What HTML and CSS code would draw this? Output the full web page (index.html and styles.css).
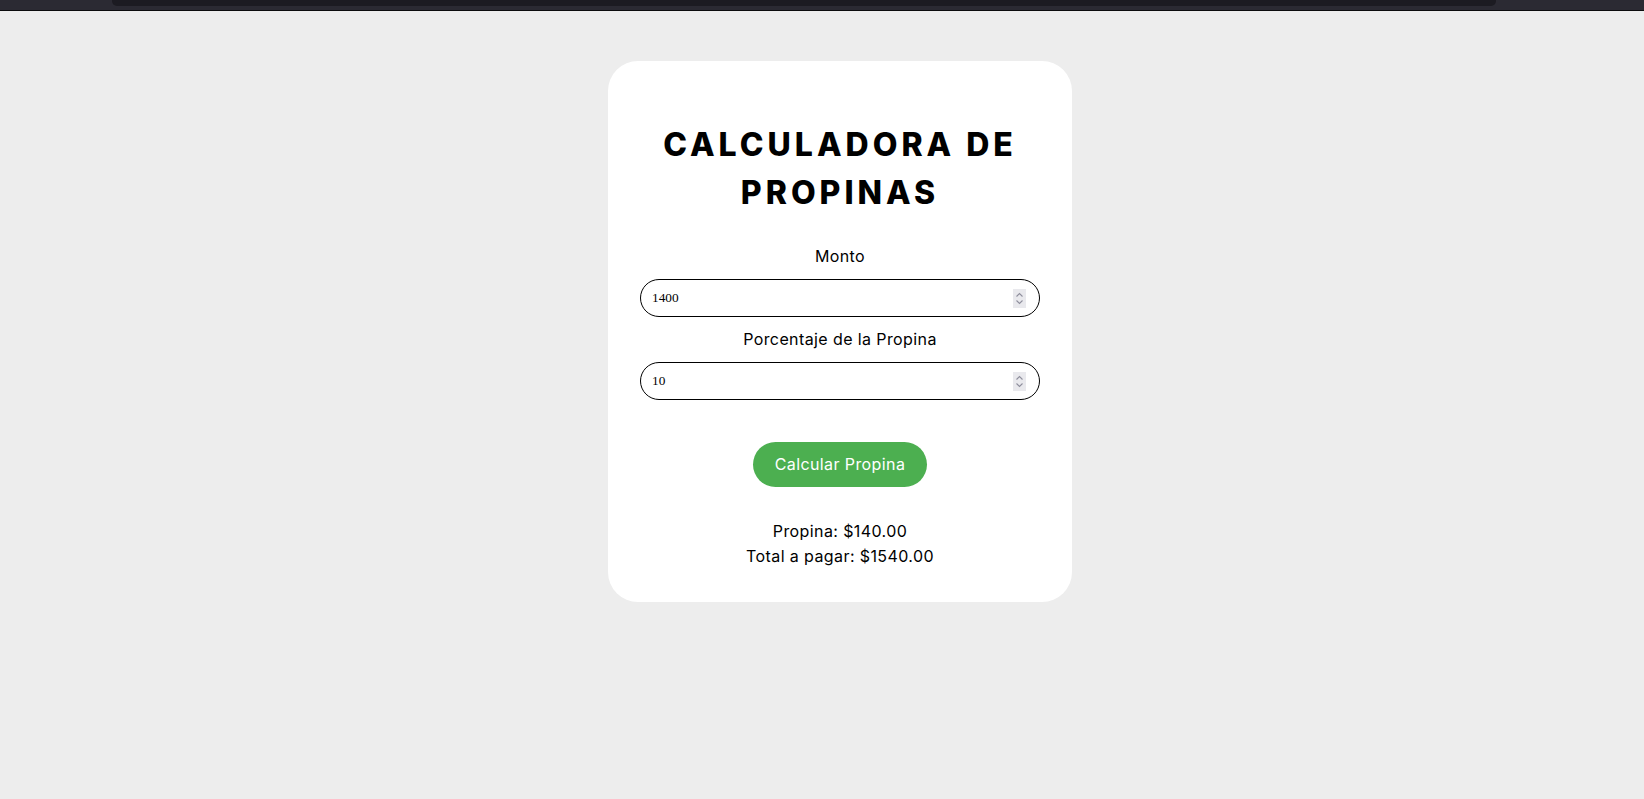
FILE: index.html
```html
<!DOCTYPE html>
<html lang="es">
<head>
<meta charset="utf-8">
<title>Calculadora de Propinas</title>
<link rel="stylesheet" href="styles.css">
</head>
<body>
  <div class="topbar"><div class="topbar-inner"></div></div>
  <main class="page">
    <section class="card">
      <h1 class="title">CALCULADORA DE PROPINAS</h1>
      <label class="label label-first" for="monto">Monto</label>
      <div class="field">
        <input class="field-input" id="monto" type="text" value="1400">
        <span class="spin">
          <svg width="13" height="19" viewBox="0 0 13 19"><path d="M3.5 7.5 L6.5 4.5 L9.5 7.5" fill="none" stroke="#8f8f9d" stroke-width="1.1"/><path d="M3.5 11.5 L6.5 14.5 L9.5 11.5" fill="none" stroke="#8f8f9d" stroke-width="1.1"/></svg>
        </span>
      </div>
      <label class="label label-second" for="porcentaje">Porcentaje de la Propina</label>
      <div class="field">
        <input class="field-input" id="porcentaje" type="text" value="10">
        <span class="spin">
          <svg width="13" height="19" viewBox="0 0 13 19"><path d="M3.5 7.5 L6.5 4.5 L9.5 7.5" fill="none" stroke="#8f8f9d" stroke-width="1.1"/><path d="M3.5 11.5 L6.5 14.5 L9.5 11.5" fill="none" stroke="#8f8f9d" stroke-width="1.1"/></svg>
        </span>
      </div>
      <button class="btn" type="button">Calcular Propina</button>
      <div class="result">
        <p class="result-line">Propina: $140.00</p>
        <p class="result-line">Total a pagar: $1540.00</p>
      </div>
    </section>
  </main>
</body>
</html>
```
FILE: styles.css
```css
* { box-sizing: border-box; }

html, body {
  margin: 0;
  padding: 0;
}

body {
  background: #ededed;
  font-family: Inter, "Noto Sans", sans-serif;
  color: #000;
  height: 799px;
  overflow: hidden;
}

.topbar {
  height: 11px;
  background: #2b2a33;
  border-bottom: 1px solid #0b0b0d;
}

.topbar-inner {
  margin-left: 112px;
  width: 1384px;
  height: 6px;
  background: #1c1b22;
  border-radius: 0 0 5px 5px;
}

.page {
  display: flex;
  justify-content: center;
  padding: 50px 0 0 36px;
}

.card {
  width: 464px;
  padding: 32px;
  background: #fff;
  border-radius: 30px;
  display: flex;
  flex-direction: column;
  align-items: stretch;
}

.title {
  margin: 28px 0 0;
  font-family: Inter, "Noto Sans", sans-serif;
  font-weight: 800;
  font-size: 32px;
  line-height: 48px;
  letter-spacing: 4px;
  text-align: center;
}

.label {
  display: block;
  font-size: 16px;
  line-height: 24px;
  letter-spacing: 0.4px;
  text-align: center;
  margin-bottom: 11px;
}

.label-first { margin-top: 27px; }
.label-second { margin-top: 10px; }

.field {
  height: 38px;
  border: 1px solid #000;
  border-radius: 19px;
  display: flex;
  align-items: center;
  padding: 0 13px 0 11px;
}

.field-input {
  flex: 1;
  min-width: 0;
  border: none;
  outline: none;
  padding: 0;
  background: transparent;
  font-family: "Liberation Serif", serif;
  font-size: 13.33px;
  color: #000;
}

.spin {
  width: 13px;
  height: 19px;
  background: #e9e9ed;
  display: flex;
}

.btn {
  align-self: center;
  margin-top: 42px;
  height: 45px;
  padding: 0 22px;
  border: none;
  border-radius: 23px;
  background: #4caf50;
  color: #fff;
  font-family: Inter, "Noto Sans", sans-serif;
  font-size: 16px;
  letter-spacing: 0.4px;
  line-height: 45px;
}

.result {
  margin-top: 32px;
  padding-bottom: 1px;
  text-align: center;
}

.result-line {
  margin: 0;
  font-size: 16px;
  line-height: 25px;
  letter-spacing: 0.4px;
}
```
